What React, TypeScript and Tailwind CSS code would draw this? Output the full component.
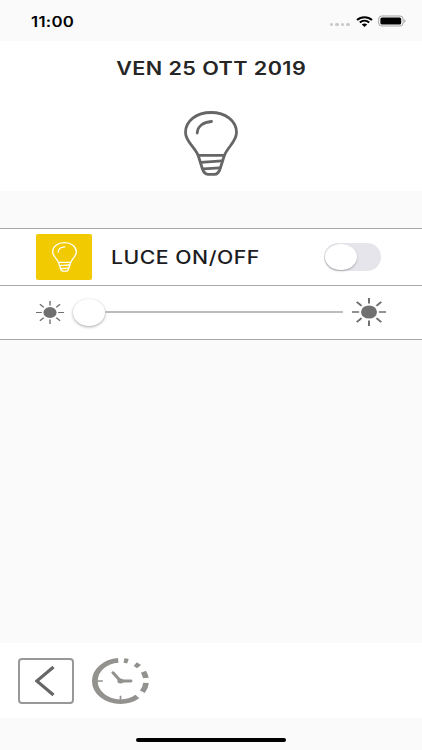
function Bulb({ className, stroke }: { className: string; stroke: number }) {
  return (
    <svg
      className={className}
      viewBox="0 0 54 65"
      preserveAspectRatio="none"
      fill="none"
      stroke="currentColor"
      strokeWidth={stroke}
      strokeLinejoin="round"
      strokeLinecap="round"
    >
      <path d="M27 1.5C12.5 1.5 1.5 10 1.5 21.5C1.5 30.5 10.5 35.5 14.2 44.5L18.3 57.5C19.5 61.5 21 63.3 24 63.3H30.5C33.5 63.3 35 61.5 36.2 57.5L40.3 44.5C44 35.5 52.5 30.5 52.5 21.5C52.5 10 41.5 1.5 27 1.5Z" />
      <path d="M14.2 44.3H40.3M17 51.3L38 49.8M19.5 57.8L35.5 56.8M13.2 22C13.5 15.5 19 11 27.5 10.5" />
    </svg>
  );
}

function Sun({ className, stroke }: { className: string; stroke: number }) {
  return (
    <svg
      className={className}
      viewBox="-50 -50 100 100"
      preserveAspectRatio="none"
      fill="currentColor"
      stroke="currentColor"
      strokeWidth={stroke}
    >
      <circle r="23.5" stroke="none" />
      <path d="M-50 0H-29M29 0H50M0 -50V-30M0 30V50M-36 -36L-22 -22M36 -36L22 -22M-36 36L-22 22M36 36L22 22" />
    </svg>
  );
}

function StatusBar() {
  return (
    <header className="flex h-[41px] shrink-0 items-start justify-between bg-[#fafafa] pl-[31px] pr-[16px]">
      <span className="mt-[12px] origin-left scale-x-[1.2] text-[14px] leading-[20px] font-semibold tracking-[0.25px] whitespace-nowrap text-black">
        11:00
      </span>
      <div className="flex pt-[15px]">
        <div className="mt-[8px] mr-[6px] flex gap-[2px]">
          <span className="h-[3px] w-[3.4px] rounded-full bg-[#c9c9c9]" />
          <span className="h-[3px] w-[3.4px] rounded-full bg-[#c9c9c9]" />
          <span className="h-[3px] w-[3.4px] rounded-full bg-[#c9c9c9]" />
          <span className="h-[3px] w-[3.4px] rounded-full bg-[#c9c9c9]" />
        </div>
        <svg className="mt-[0.5px] h-[11px] w-[17px]" viewBox="0 0 17 11" preserveAspectRatio="none" fill="none" stroke="#000" strokeWidth="2">
          <path d="M1 4C5 0.2 12 0.2 16 4M3.8 6.6C6.5 4.2 10.5 4.2 13.2 6.6" />
          <path d="M5.8 8.6C7.3 7.2 9.7 7.2 11.2 8.6L8.5 11Z" fill="#000" stroke="none" />
        </svg>
        <svg className="ml-[5.5px] h-[12px] w-[28px]" viewBox="0 0 28 12">
          <rect x="0.7" y="1" width="24.4" height="10" rx="3" fill="none" stroke="#a3a3a3" strokeWidth="1" />
          <rect x="2.4" y="2.6" width="20.8" height="6.8" rx="1.5" fill="#000" />
          <path d="M26.3 4.3C27.9 5 27.9 7 26.3 7.7Z" fill="#999" />
        </svg>
      </div>
    </header>
  );
}

function LightRow() {
  return (
    <section className="flex h-[57px] shrink-0 items-center border-t border-[#aaaaaa] bg-white pl-[36px]">
      <div className="flex h-[46px] w-[56px] items-center justify-center rounded-[2px] bg-[#f1ca02] text-white">
        <Bulb className="h-[30px] w-[25px]" stroke={2.8} />
      </div>
      <span className="ml-[19px] w-[213px] origin-left scale-x-[1.18] pt-[2px] text-[18px] leading-[24px] font-medium tracking-[0.43px] whitespace-nowrap text-[#1d1d1f]">
        LUCE ON/OFF
      </span>
      <div className="flex h-[28px] w-[57px] items-center rounded-full bg-[#e6e5eb] pl-[1px]">
        <span className="h-[26px] w-[32px] rounded-[50%] bg-white shadow-[0_1px_2px_rgba(0,0,0,0.3)]" />
      </div>
    </section>
  );
}

function DimmerRow() {
  return (
    <section className="flex h-[55px] shrink-0 items-center border-y border-[#aaaaaa] bg-white pl-[36px] text-[#707070]">
      <Sun className="h-[23px] w-[28px]" stroke={5} />
      <span className="ml-[9px] h-[27px] w-[32px] rounded-[50%] bg-white shadow-[0_1px_3px_rgba(0,0,0,0.35)]" />
      <span className="mb-px h-[2px] w-[238px] bg-[#bcbcbc]" />
      <Sun className="mb-px ml-[9px] h-[28px] w-[34px]" stroke={6} />
    </section>
  );
}

function Clock() {
  return (
    <svg
      className="ml-[18px] h-[46px] w-[57px]"
      viewBox="-50 -50 100 100"
      preserveAspectRatio="none"
      fill="none"
      stroke="#93928f"
    >
      <circle
        r="45"
        strokeWidth="10"
        pathLength="360"
        strokeDasharray="0 8 9 18 11 17 18 14 26 17 215 7"
        transform="rotate(-90)"
      />
      <path d="M-42 0H-31M0 42V32" strokeWidth="3" />
      <path d="M-13 -18L0 0H18" strokeWidth="6" strokeLinecap="round" strokeLinejoin="round" />
      <circle r="5.5" fill="#93928f" stroke="none" />
    </svg>
  );
}

export default function App() {
  return (
    <main className="flex h-[750px] w-[422px] flex-col overflow-hidden bg-[#fafafa] font-[Inter,sans-serif]">
      <StatusBar />
      <section className="flex h-[150px] shrink-0 flex-col items-center bg-white pt-[16px]">
        <h1 className="scale-x-[1.2] text-[18px] leading-[24px] font-semibold tracking-[0.35px] whitespace-nowrap text-[#262626]">
          VEN 25 OTT 2019
        </h1>
        <Bulb className="mt-[30px] h-[65px] w-[54px] text-[#666666]" stroke={2.8} />
      </section>
      <div className="h-[37px] shrink-0" />
      <LightRow />
      <DimmerRow />
      <div className="flex-1" />
      <footer className="flex h-[75px] shrink-0 items-center bg-white pl-[18px]">
        <button className="flex h-[46px] w-[56px] items-center justify-center rounded-[4px] border-2 border-[#989898] pr-[3px]">
          <svg className="h-[32px] w-[20px]" viewBox="0 0 20 32" fill="none" stroke="#666" strokeWidth="3.2">
            <path d="M18.5 2L1.8 16L18.5 30" />
          </svg>
        </button>
        <Clock />
      </footer>
      <div className="flex h-[32px] shrink-0 justify-center pt-[20px]">
        <span className="h-[4px] w-[150px] rounded-full bg-black" />
      </div>
    </main>
  );
}
